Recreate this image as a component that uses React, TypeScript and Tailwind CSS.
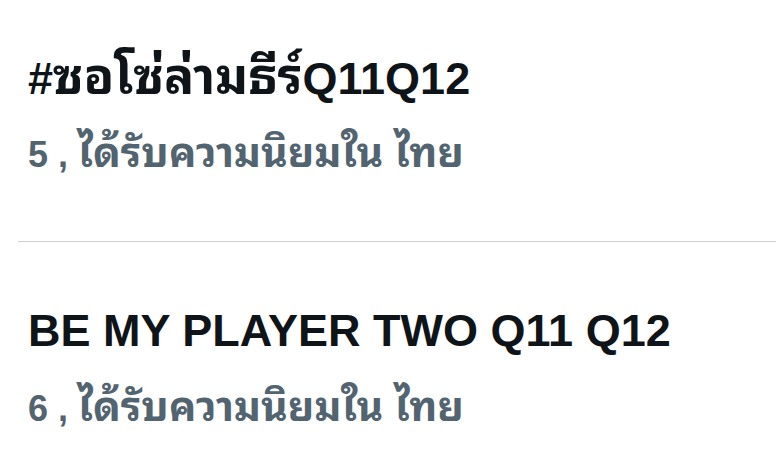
export default function App() {
  const baseFont = {
    fontFamily:
      '"Liberation Sans", "Noto Sans Thai Looped", "Noto Sans Thai", Loma, Garuda, "Noto Sans", sans-serif',
  };

  const trends = [
    { rank: "5", hash: "#", thai: "ซอโซ่ล่ามธีร์", latin: "Q11Q12" },
    { rank: "6", hash: "", thai: "", latin: "BE MY PLAYER TWO Q11 Q12" },
  ];

  return (
    <div className="h-[476px] w-[776px] overflow-hidden bg-white" style={baseFont}>
      {trends.map((t, i) => (
        <div key={t.rank}>
          {i > 0 && <div className="ml-[18px] mt-[68px] border-t border-[#cfcfd1]" />}
          <div className={i === 0 ? "pl-[28px] pt-[51px]" : "pl-[28px] pt-[63px]"}>
            <div className="h-[52px] whitespace-nowrap text-[45px] font-bold leading-[52px] text-[#0f1419]">
              {t.hash}
              {t.thai && (
                <span className="text-[50px] leading-[52px]">{t.thai}</span>
              )}
              {t.latin}
            </div>
            <div className="mt-[30px] h-[40px] whitespace-nowrap text-[36px] font-bold leading-[40px] text-[#536471]">
              {t.rank} ,{" "}
              <span className="text-[41px] leading-[40px]">ได้รับความนิยมใน ไทย</span>
            </div>
          </div>
        </div>
      ))}
    </div>
  );
}
